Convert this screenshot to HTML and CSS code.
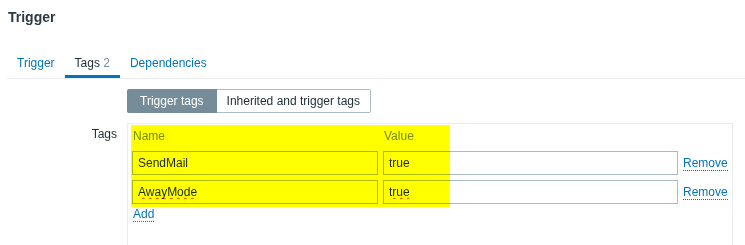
FILE: index.html
```html
<!DOCTYPE html>
<html lang="en">
<head>
    <meta charset="UTF-8">
    <meta name="viewport" content="width=device-width, initial-scale=1.0">
    <title>Trigger</title>
    <link rel="stylesheet" href="styles.css">
</head>
<body>
    <!-- 페이지 제목 -->
    <h1 class="title">Trigger</h1>

    <!-- 탭 메뉴 -->
    <ul class="tabs">
        <li><a href="#">Trigger</a></li>
        <li class="active"><a href="#">Tags <span class="count">2</span></a></li>
        <li><a href="#">Dependencies</a></li>
    </ul>

    <div class="form">
        <div class="label"></div>
        <div class="field">
            <div class="segment">
                <span class="seg on">Trigger tags</span>
                <span class="seg">Inherited and trigger tags</span>
            </div>
        </div>

        <div class="label tags-label">Tags</div>
        <div class="field">
            <div class="tag-table">
                <div class="tag-grid">
                    <div class="head">Name</div>
                    <div class="head">Value</div>
                    <div></div>

                    <input class="box" type="text" value="SendMail">
                    <input class="box" type="text" value="true">
                    <div class="act"><a href="#" class="link">Remove</a></div>

                    <input class="box misspelt" type="text" value="AwayMode">
                    <input class="box misspelt" type="text" value="true">
                    <div class="act"><a href="#" class="link">Remove</a></div>
                </div>
                <div class="add"><a href="#" class="link">Add</a></div>

                <!-- 형광펜 표시 -->
                <div class="marker"></div>
            </div>
        </div>
    </div>
</body>
</html>
```

FILE: styles.css
```css
body {
    margin: 0;
    font-family: Arial, "Liberation Sans", sans-serif;
    font-size: 12px;
    line-height: 14px;
    color: #1f2c33;
    background: #fff;
}
.title {
    margin: 0;
    padding: 9px 0 0 8px;
    font-size: 14px;
    line-height: 16px;
    font-weight: bold;
    color: #2b3a42;
}
.tabs {
    list-style: none;
    margin: 23px 0 0 7px;
    padding: 0;
    display: flex;
    border-bottom: 1px solid #ebeef0;
}
.tabs a {
    display: block;
    padding: 8px 10px 5px;
    border-bottom: 3px solid transparent;
    color: #0275b8;
    text-decoration: none;
}
.tabs .active a {
    color: #1f2c33;
    border-bottom-color: #0275b8;
}
.tabs .count {
    color: #768d99;
}
.form {
    display: grid;
    grid-template-columns: 117px 1fr;
    column-gap: 10px;
    row-gap: 10px;
    margin-top: 10px;
}
.label {
    text-align: right;
}
.tags-label {
    padding-top: 4px;
}
.segment {
    display: flex;
}
.seg {
    height: 22px;
    line-height: 22px;
    padding: 0 10px;
    border: 1px solid #acbbc2;
    border-left: none;
    border-radius: 0 2px 2px 0;
}
.seg.on {
    padding: 0 12px 0 13px;
    background: #768d99;
    border-color: #768d99;
    color: #fff;
    border-radius: 2px 0 0 2px;
}
.tag-table {
    position: relative;
    width: 600px;
    border: 1px solid #ebeef0;
    padding: 5px 0 30px 4px;
}
.tag-grid {
    display: grid;
    grid-template-columns: 246px 295px auto;
    column-gap: 5px;
    row-gap: 5px;
    align-items: center;
}
.head {
    padding: 0 0 3px 1px;
    color: #768d99;
}
.box {
    box-sizing: border-box;
    width: 100%;
    height: 24px;
    margin: 0;
    padding: 0 5px;
    border: 1px solid #acbbc2;
    font-family: Arial, "Liberation Sans", sans-serif;
    font-size: 12px;
    color: #1f2c33;
    background: #fff;
    outline: none;
}
.misspelt {
    text-decoration: underline wavy #e33;
    text-decoration-thickness: 1px;
    text-decoration-skip-ink: none;
}
.link {
    color: #0275b8;
    text-decoration: none;
    border-bottom: 1px dotted #0275b8;
}
.add {
    margin-top: 3px;
    padding-left: 1px;
}
.marker {
    position: absolute;
    left: 3px;
    top: 1px;
    width: 319px;
    height: 82px;
    background: #ffff00;
    mix-blend-mode: multiply;
    pointer-events: none;
}
```
